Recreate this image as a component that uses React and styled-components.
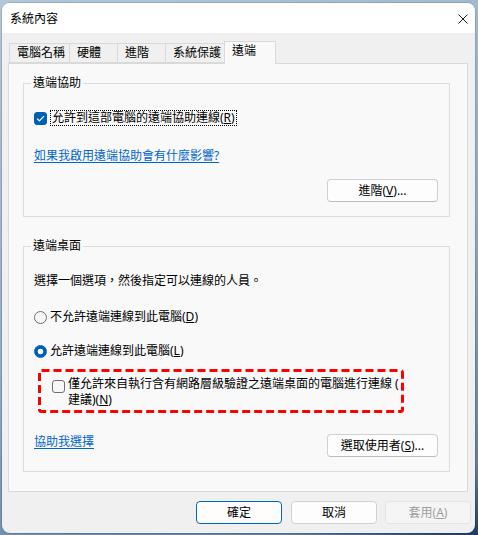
import React from "react";
import styled, { createGlobalStyle } from "styled-components";

const GlobalStyle = createGlobalStyle`
  html, body {
    margin: 0;
    padding: 0;
  }
  body {
    width: 478px;
    height: 535px;
    overflow: hidden;
    background: linear-gradient(160deg, #b3c7da 0%, #8ea8c2 55%, #5f7fa3 90%, #1f3a66 100%);
    font-family: "Noto Sans", "Noto Sans CJK TC", sans-serif;
    font-size: 12px;
    color: #000;
  }
`;

const tabs = [
  { label: "電腦名稱", width: 61 },
  { label: "硬體", width: 49 },
  { label: "進階", width: 49 },
  { label: "系統保護", width: 60 },
  { label: "遠端", width: 52, active: true },
];

export default function App() {
  return (
    <>
      <GlobalStyle />
      <Desk>
        <Window>
          <TitleBar>
            <Title>系統內容</Title>
            <CloseIcon width="10" height="10" viewBox="0 0 10 10">
              <path d="M0.5 0.5 L9.5 9.5 M9.5 0.5 L0.5 9.5" stroke="#1a1a1a" strokeWidth="1" fill="none" />
            </CloseIcon>
          </TitleBar>

          <Body>
            <TabRow>
              {tabs.map((t) => (
                <Tab key={t.label} $width={t.width} $active={t.active}>
                  {t.label}
                </Tab>
              ))}
            </TabRow>

            <Panel>
              <Group $top={19}>
                <Legend>遠端協助</Legend>
                <Row $mt={26}>
                  <CheckBox $checked>
                    <svg width="9" height="7" viewBox="0 0 9 7">
                      <path d="M1 3.6 L3.4 5.8 L8 1.2" stroke="#fff" strokeWidth="1.2" fill="none" />
                    </svg>
                  </CheckBox>
                  <FocusLabel>
                    允許到這部電腦的遠端協助連線(<u>R</u>)
                  </FocusLabel>
                </Row>
                <Link $mt={22}>如果我啟用遠端協助會有什麼影響?</Link>
                <RightRow $mt={15}>
                  <Button>
                    進階(<u>V</u>)...
                  </Button>
                </RightRow>
              </Group>

              <Group $top={29}>
                <Legend>遠端桌面</Legend>
                <Text $mt={26}>選擇一個選項，然後指定可以連線的人員。</Text>
                <Row $mt={20}>
                  <Radio />
                  <Label>
                    不允許遠端連線到此電腦(<u>D</u>)
                  </Label>
                </Row>
                <Row $mt={18}>
                  <Radio $checked />
                  <Label>
                    允許遠端連線到此電腦(<u>L</u>)
                  </Label>
                </Row>

                <Highlight>
                  <DashFrame width="366" height="44" viewBox="0 0 366 44">
                    <rect x="1.5" y="1.5" width="363" height="41" rx="2" fill="none" stroke="#ff0000" strokeWidth="3" strokeDasharray="8 4" />
                  </DashFrame>
                  <NestedRow>
                    <CheckBox $nested />
                    <WrapLabel>
                      <LabelLine>僅允許來自執行含有網路層級驗證之遠端桌面的電腦進行連線 (</LabelLine>
                      <LabelLine>
                        建議)(<u>N</u>)
                      </LabelLine>
                    </WrapLabel>
                  </NestedRow>
                </Highlight>

                <SplitRow $mt={21}>
                  <Link $pb={1}>協助我選擇</Link>
                  <Button>
                    選取使用者(<u>S</u>)...
                  </Button>
                </SplitRow>
              </Group>
            </Panel>

            <ButtonRow>
              <DialogButton $primary>確定</DialogButton>
              <DialogButton>取消</DialogButton>
              <DialogButton disabled>
                套用(<u>A</u>)
              </DialogButton>
            </ButtonRow>
          </Body>
        </Window>
      </Desk>
    </>
  );
}

const Desk = styled.div`
  width: 478px;
  height: 535px;
  box-sizing: border-box;
  padding: 3px 3px 2px 2px;
`;

const Window = styled.div`
  width: 473px;
  height: 530px;
  border-radius: 8px;
  overflow: hidden;
  background: #f0f0f0;
  display: flex;
  flex-direction: column;
  box-shadow: 0 0 0 1px rgba(0, 0, 0, 0.12);
`;

const TitleBar = styled.div`
  height: 30px;
  flex: none;
  background: #ffffff;
  display: flex;
  align-items: center;
  justify-content: space-between;
  padding: 0 7px 0 8px;
`;

const Title = styled.span`
  font-size: 12px;
  line-height: 16px;
  margin-top: 1px;
`;

const CloseIcon = styled.svg`
  display: block;
  margin-top: 1px;
`;

const Body = styled.div`
  padding: 8px 7px 0 6px;
`;

const TabRow = styled.div`
  display: flex;
  align-items: flex-end;
  height: 22px;
  padding-left: 1px;
`;

const Tab = styled.div`
  position: relative;
  box-sizing: border-box;
  width: ${(p) => p.$width}px;
  height: ${(p) => (p.$active ? 23 : 20)}px;
  margin-left: -1px;
  margin-bottom: ${(p) => (p.$active ? -1 : 0)}px;
  &:first-child {
    margin-left: 0;
  }
  padding-left: 7px;
  border: 1px solid #d9d9d9;
  border-bottom: ${(p) => (p.$active ? "none" : "1px solid #d9d9d9")};
  background: ${(p) => (p.$active ? "#f9f9f9" : "#f0f0f0")};
  z-index: ${(p) => (p.$active ? 2 : 1)};
  line-height: 18px;
  white-space: nowrap;
`;

const Panel = styled.div`
  position: relative;
  z-index: 1;
  background: #f9f9f9;
  border: 1px solid #d9d9d9;
  padding: 0 17px 19px 14px;
  display: flex;
  flex-direction: column;
`;

const Group = styled.div`
  position: relative;
  margin-top: ${(p) => p.$top}px;
  border: 1px solid #dcdcdc;
  padding: 0 11px 14px 10px;
  display: flex;
  flex-direction: column;
`;

const Legend = styled.span`
  position: absolute;
  top: -9px;
  left: 7px;
  padding: 0 2px;
  background: #f9f9f9;
  line-height: 16px;
`;

const Row = styled.div`
  display: flex;
  align-items: center;
  height: 16px;
  margin-top: ${(p) => p.$mt || 0}px;
`;

const CheckBox = styled.span`
  box-sizing: border-box;
  width: 13px;
  height: 13px;
  flex: none;
  border-radius: 3px;
  display: flex;
  align-items: center;
  justify-content: center;
  background: ${(p) => (p.$checked ? "#005fb8" : "#f7f7f7")};
  border: 1px solid ${(p) => (p.$checked ? "#005fb8" : "#6f6f6f")};
  margin-top: ${(p) => (p.$nested ? 4 : 0)}px;
`;

const FocusLabel = styled.span`
  margin-left: 3px;
  padding: 0 1px;
  border: 1px dotted #000;
  line-height: 14px;
  white-space: nowrap;
`;

const Label = styled.span`
  margin-left: 3px;
  line-height: 16px;
  white-space: nowrap;
`;

const Radio = styled.span`
  box-sizing: border-box;
  width: 13px;
  height: 13px;
  flex: none;
  border-radius: 50%;
  border: 1px solid ${(p) => (p.$checked ? "#005fb8" : "#6f6f6f")};
  background: ${(p) =>
    p.$checked
      ? "radial-gradient(circle, #ffffff 0 2.6px, #005fb8 3.1px)"
      : "#f7f7f7"};
`;

const Text = styled.div`
  line-height: 16px;
  margin-top: ${(p) => p.$mt || 0}px;
  white-space: nowrap;
`;

const Link = styled.a`
  align-self: flex-start;
  color: #0066cc;
  text-decoration: underline;
  text-underline-offset: 2px;
  line-height: 16px;
  cursor: pointer;
  margin-top: ${(p) => p.$mt || 0}px;
  padding-bottom: ${(p) => p.$pb || 0}px;
`;

const RightRow = styled.div`
  display: flex;
  justify-content: flex-end;
  margin-top: ${(p) => p.$mt || 0}px;
`;

const SplitRow = styled.div`
  display: flex;
  justify-content: space-between;
  align-items: flex-end;
  margin-top: ${(p) => p.$mt || 0}px;
`;

const Button = styled.button`
  box-sizing: border-box;
  width: 111px;
  height: 23px;
  padding: 0;
  border: 1px solid #d0d0d0;
  border-bottom-color: #bdbdbd;
  border-radius: 4px;
  background: #fdfdfd;
  font-family: inherit;
  font-size: 12px;
  line-height: 16px;
  color: #000;
`;

const Highlight = styled.div`
  position: relative;
  box-sizing: border-box;
  width: 366px;
  height: 44px;
  margin: 10px 0 0 4px;
  padding: 7px 0 0 14px;
`;

const DashFrame = styled.svg`
  position: absolute;
  left: 0;
  top: 0;
  pointer-events: none;
`;

const NestedRow = styled.div`
  display: flex;
  align-items: flex-start;
`;

const WrapLabel = styled.span`
  margin-left: 3px;
  display: flex;
  flex-direction: column;
`;

const LabelLine = styled.span`
  line-height: 16px;
  height: 16px;
  white-space: nowrap;
`;

const ButtonRow = styled.div`
  display: flex;
  justify-content: flex-end;
  gap: 8px;
  margin: 9px -3px 0 0;
`;

const DialogButton = styled.button`
  box-sizing: border-box;
  width: 86px;
  height: 23px;
  padding: 0;
  border-radius: 4px;
  font-family: inherit;
  font-size: 12px;
  line-height: 16px;
  background: ${(p) => (p.disabled ? "#f5f5f5" : "#fdfdfd")};
  color: ${(p) => (p.disabled ? "#9d9d9d" : "#000")};
  border: 1px solid ${(p) => (p.$primary ? "#0067c0" : p.disabled ? "#e3e3e3" : "#d0d0d0")};
  &:first-child {
    margin-right: 1px;
  }
`;
